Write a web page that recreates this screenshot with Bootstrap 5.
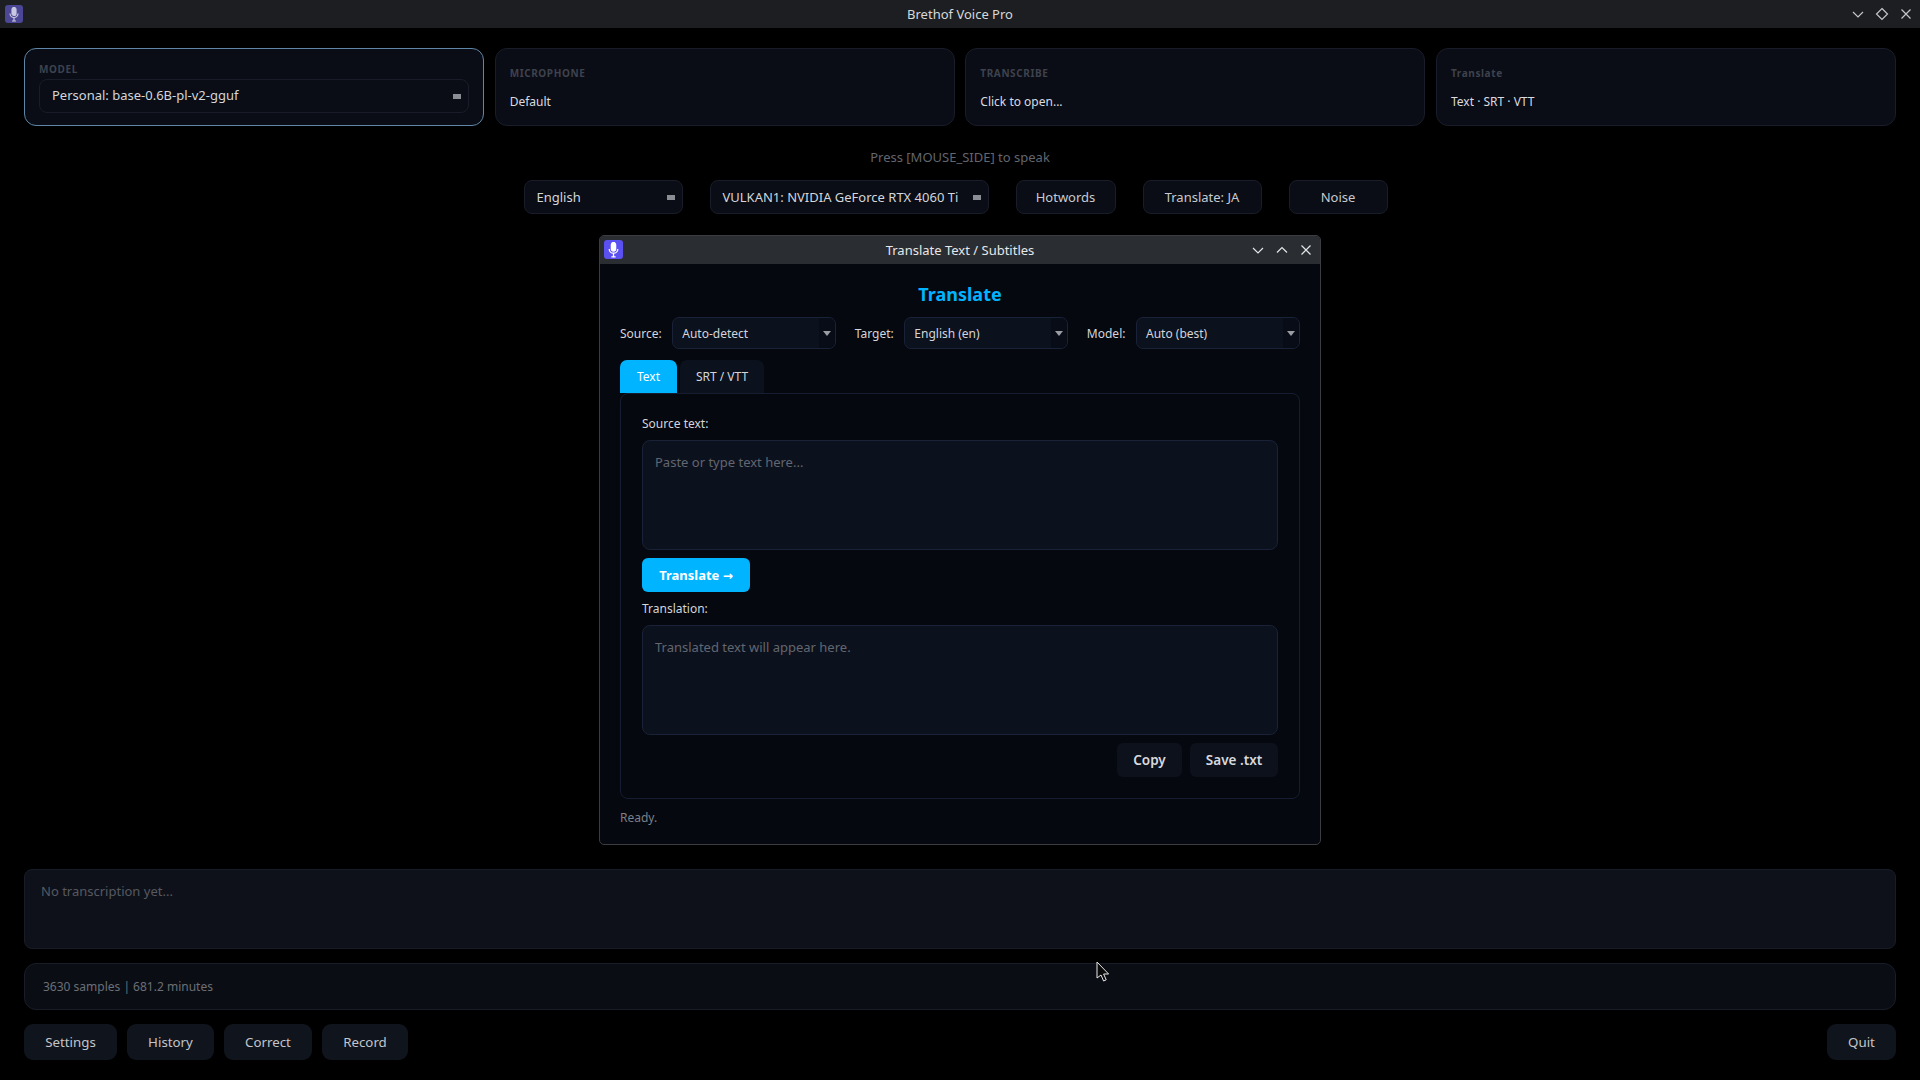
<!DOCTYPE html>
<html lang="en">
<head>
    <meta charset="UTF-8">
    <meta name="viewport" content="width=device-width, initial-scale=1.0">
    <title>Brethof Voice Pro</title>
    <link href="https://cdn.jsdelivr.net/npm/bootstrap@5.3.3/dist/css/bootstrap.min.css" rel="stylesheet">
    <style>
        html, body { height: 100%; }
        body { background: #000; color: #d9dbe0; font-family: "Noto Sans", sans-serif; font-size: 13px; overflow: hidden; }

        .win-bar { height: 28px; background: #1c1e21; color: #d6d8da; font-size: 13px; flex: none; }
        .win-icon { width: 18px; height: 18px; border-radius: 3px; background: #4c4794; margin-left: 5px; }
        .win-title { left: 0; right: 0; top: 0; line-height: 28px; text-align: center; }
        .win-ctrls { gap: 10px; padding-right: 7px; }
        .win-ctrls svg { width: 14px; height: 14px; stroke: #c4c6c9; stroke-width: 1.2; fill: none; }

        .app-main { padding: 20px 24px 20px; min-height: 0; }
        .top-cards { display: grid; grid-template-columns: repeat(4, 1fr); gap: 10.67px; height: 78px; }
        .top-card { background: #0a0d15; border: 1px solid #191d29; border-radius: 12px; padding: 2px 14px 0; }
        .top-card.active { border-color: #5f86a6; padding-top: 0; }
        .top-label { color: #3e424e; font-size: 10px; font-weight: 700; letter-spacing: .6px; line-height: 14px; }
        .top-value { font-size: 12px; line-height: 18px; margin-top: 13px; color: #d9dbe0; }
        .model-pick { height: 34px; margin-top: 3px; }

        .pick-box { background: #0a0d15; border: 1px solid #191d29; border-radius: 8px; height: 34px; padding: 1px 7px 0 12px; font-size: 13px; color: #d4d6db; white-space: nowrap; }
        .pick-dot { width: 8px; height: 5px; background: #8b8d94; flex: none; }
        .hint-line { color: #63666d; font-size: 13px; line-height: 20px; margin-top: 21px; }
        .ctrl-row { margin-top: 13px; padding-right: 9px; gap: 27px; }
        .ctrl-btn { background: #0a0d15; border: 1px solid #191d29; border-radius: 8px; height: 34px; color: #c8cad0; font-size: 13px; padding: 2px 0 0; }

        .trans-box { background: #0e1119; border: 1px solid #181c26; border-radius: 8px; height: 80px; padding: 12px 16px; color: #565961; font-size: 13px; }
        .stats-box { background: #0a0d14; border: 1px solid #1a1d28; border-radius: 12px; height: 47px; margin-top: 14px; padding: 0 18px; color: #6c6f76; font-size: 12px; }
        .foot-row { margin-top: 14px; }
        .foot-btn { background: #10141c; border: 0; border-radius: 9px; height: 36px; color: #c3c5ca; font-size: 13.3px; padding: 2px 0 0; }

        .tr-dialog { left: 599px; top: 235px; width: 722px; height: 610px; background: #05080f; border: 1px solid #3a3c42; border-radius: 5px; overflow: hidden; }
        .tr-bar { height: 28px; background: #2a2d32; color: #e6e7e9; font-size: 13px; line-height: 29px; }
        .tr-icon { width: 19px; height: 19px; border-radius: 3px; background: #5b50f0; left: 4px; top: 4px; }
        .tr-ctrls { right: 7px; top: 0; height: 28px; gap: 10px; }
        .tr-ctrls svg { width: 14px; height: 14px; stroke: #e4e5e7; stroke-width: 1.2; fill: none; }
        .tr-body { padding: 0 20px; }
        .tr-head { color: #00b4ff; font-size: 18px; font-weight: 700; line-height: 24px; margin-top: 18px; text-align: center; }
        .tr-row { margin-top: 11px; height: 32px; font-size: 12px; color: #d3d5da; }
        .tr-select { width: 164px; height: 32px; background: #0c111e; border: 1px solid #1a2238; border-radius: 7px; padding-left: 9px; color: #d3d5da; overflow: hidden; }
        .tr-select-text { padding-top: 1px; }
        .tr-drop { width: 16px; height: 100%; background: #080c16; }
        .tr-arrow { width: 0; height: 0; border-left: 4px solid transparent; border-right: 4px solid transparent; border-top: 5px solid #9a9ca2; }
        .tab-row { margin-top: 11px; height: 33px; gap: 3px; }
        .tab-item { border-radius: 7px 7px 0 0; font-size: 12px; line-height: 33px; text-align: center; background: #0c111e; color: #d3d5da; width: 84px; }
        .tab-item.active { background: #00b4ff; color: #fff; width: 57px; }
        .tr-panel { height: 406px; border: 1px solid #161d31; border-radius: 8px; padding: 21px 21px 0; }
        .field-label { font-size: 12px; line-height: 18px; color: #d3d5da; }
        .tr-area { height: 110px; margin-top: 7px; background: #0c111e; border: 1px solid #1a2238; border-radius: 8px; padding: 12px 12px; color: #d3d5da; font-size: 13px; resize: none; box-shadow: none; }
        .tr-area:focus { background: #0c111e; border-color: #1a2238; box-shadow: none; color: #d3d5da; }
        .tr-area::placeholder { color: #63666f; opacity: 1; }
        .go-btn { background: #00b4ff; border: 0; border-radius: 6px; color: #fff; font-weight: 700; font-size: 13px; width: 108px; height: 34px; margin-top: 8px; padding: 1px 0 0; }
        .go-btn:hover { background: #00b4ff; color: #fff; }
        .go-arrow { font-family: "DejaVu Sans", sans-serif; font-size: 12px; font-weight: 700; }
        .act-btn { background: #0d111b; border: 0; border-radius: 6px; color: #d7d9de; font-weight: 600; font-size: 13.5px; height: 34px; padding: 0; }
        .status-line { color: #7c8089; font-size: 12px; line-height: 18px; margin-top: 10px; }
        .mouse-arrow { left: 1096px; top: 961px; width: 14px; height: 21px; }
    </style>
</head>
<body class="d-flex flex-column">
    <div class="win-bar d-flex align-items-center justify-content-between position-relative">
        <div class="win-icon d-flex align-items-center justify-content-center">
            <svg width="10" height="15" viewBox="0 0 10 15" fill="none" stroke="#c9c8e2" stroke-width="1.2"><rect x="3" y="0.5" width="4" height="8" rx="2" fill="#c9c8e2"/><path d="M1 6.5a4 4 0 0 0 8 0M5 10.5v3M3 14h4"/></svg>
        </div>
        <div class="win-title position-absolute">Brethof Voice Pro</div>
        <div class="win-ctrls d-flex align-items-center">
            <svg viewBox="0 0 14 14"><path d="M2 5l5 5 5-5"/></svg>
            <svg viewBox="0 0 14 14"><path d="M7 1.5L12.5 7 7 12.5 1.5 7z"/></svg>
            <svg viewBox="0 0 14 14"><path d="M2.5 2.5l9 9M11.5 2.5l-9 9"/></svg>
        </div>
    </div>

    <div class="app-main flex-grow-1 d-flex flex-column">
        <div class="top-cards">
            <div class="top-card active d-flex flex-column justify-content-center">
                <div class="top-label">MODEL</div>
                <div class="pick-box model-pick d-flex align-items-center justify-content-between">
                    <span>Personal: base-0.6B-pl-v2-gguf</span><span class="pick-dot"></span>
                </div>
            </div>
            <div class="top-card d-flex flex-column justify-content-center">
                <div class="top-label">MICROPHONE</div>
                <div class="top-value">Default</div>
            </div>
            <div class="top-card d-flex flex-column justify-content-center">
                <div class="top-label">TRANSCRIBE</div>
                <div class="top-value">Click to open...</div>
            </div>
            <div class="top-card d-flex flex-column justify-content-center">
                <div class="top-label">Translate</div>
                <div class="top-value">Text · SRT · VTT</div>
            </div>
        </div>

        <div class="hint-line text-center">Press [MOUSE_SIDE] to speak</div>

        <div class="ctrl-row d-flex justify-content-center">
            <div class="pick-box d-flex align-items-center justify-content-between" style="width: 159px">
                <span>English</span><span class="pick-dot"></span>
            </div>
            <div class="pick-box d-flex align-items-center justify-content-between" style="width: 279px">
                <span>VULKAN1: NVIDIA GeForce RTX 4060 Ti</span><span class="pick-dot"></span>
            </div>
            <button class="btn ctrl-btn" style="width: 100px">Hotwords</button>
            <button class="btn ctrl-btn" style="width: 119px">Translate: JA</button>
            <button class="btn ctrl-btn" style="width: 99px">Noise</button>
        </div>

        <div class="mt-auto">
            <div class="trans-box">No transcription yet...</div>
            <div class="stats-box d-flex align-items-center">3630 samples | 681.2 minutes</div>
            <div class="foot-row d-flex align-items-center">
                <button class="btn foot-btn" style="width: 93px; margin-right: 10px">Settings</button>
                <button class="btn foot-btn" style="width: 87px; margin-right: 10px">History</button>
                <button class="btn foot-btn" style="width: 88px; margin-right: 10px">Correct</button>
                <button class="btn foot-btn" style="width: 86px">Record</button>
                <button class="btn foot-btn ms-auto" style="width: 69px">Quit</button>
            </div>
        </div>
    </div>

    <div class="tr-dialog position-absolute">
        <div class="tr-bar position-relative text-center">
            Translate Text / Subtitles
            <div class="tr-icon position-absolute d-flex align-items-center justify-content-center">
                <svg width="11" height="16" viewBox="0 0 10 15" fill="none" stroke="#fff" stroke-width="1.2"><rect x="3" y="0.5" width="4" height="8" rx="2" fill="#fff"/><path d="M1 6.5a4 4 0 0 0 8 0M5 10.5v3M3 14h4"/></svg>
            </div>
            <div class="tr-ctrls position-absolute d-flex align-items-center">
                <svg viewBox="0 0 14 14"><path d="M2 5l5 5 5-5"/></svg>
                <svg viewBox="0 0 14 14"><path d="M2 9.5l5-5 5 5"/></svg>
                <svg viewBox="0 0 14 14"><path d="M2.5 2.5l9 9M11.5 2.5l-9 9"/></svg>
            </div>
        </div>
        <div class="tr-body">
            <div class="tr-head">Translate</div>
            <div class="tr-row d-flex align-items-center justify-content-between">
                <span class="tr-select-text">Source:</span>
                <div class="tr-select d-flex align-items-center justify-content-between"><span class="tr-select-text">Auto-detect</span><span class="tr-drop d-flex align-items-center justify-content-center"><span class="tr-arrow"></span></span></div>
                <span class="ms-2 tr-select-text">Target:</span>
                <div class="tr-select d-flex align-items-center justify-content-between"><span class="tr-select-text">English (en)</span><span class="tr-drop d-flex align-items-center justify-content-center"><span class="tr-arrow"></span></span></div>
                <span class="ms-2 tr-select-text">Model:</span>
                <div class="tr-select d-flex align-items-center justify-content-between"><span class="tr-select-text">Auto (best)</span><span class="tr-drop d-flex align-items-center justify-content-center"><span class="tr-arrow"></span></span></div>
            </div>
            <div class="tab-row d-flex">
                <div class="tab-item active">Text</div>
                <div class="tab-item">SRT / VTT</div>
            </div>
            <div class="tr-panel">
                <div class="field-label">Source text:</div>
                <textarea class="form-control tr-area" placeholder="Paste or type text here..."></textarea>
                <button class="btn go-btn d-block">Translate <span class="go-arrow">→</span></button>
                <div class="field-label mt-2">Translation:</div>
                <textarea class="form-control tr-area" placeholder="Translated text will appear here."></textarea>
                <div class="d-flex justify-content-end gap-2 mt-2">
                    <button class="btn act-btn" style="width: 65px">Copy</button>
                    <button class="btn act-btn" style="width: 88px">Save .txt</button>
                </div>
            </div>
            <div class="status-line">Ready.</div>
        </div>
    </div>

    <svg class="mouse-arrow position-absolute" viewBox="0 0 14 21"><path d="M1 1v16l4-3 2.6 6 2.6-1.2-2.6-5.8h5z" fill="#0a0a0a" stroke="#e8e8e8" stroke-width="1"/></svg>
</body>
</html>
